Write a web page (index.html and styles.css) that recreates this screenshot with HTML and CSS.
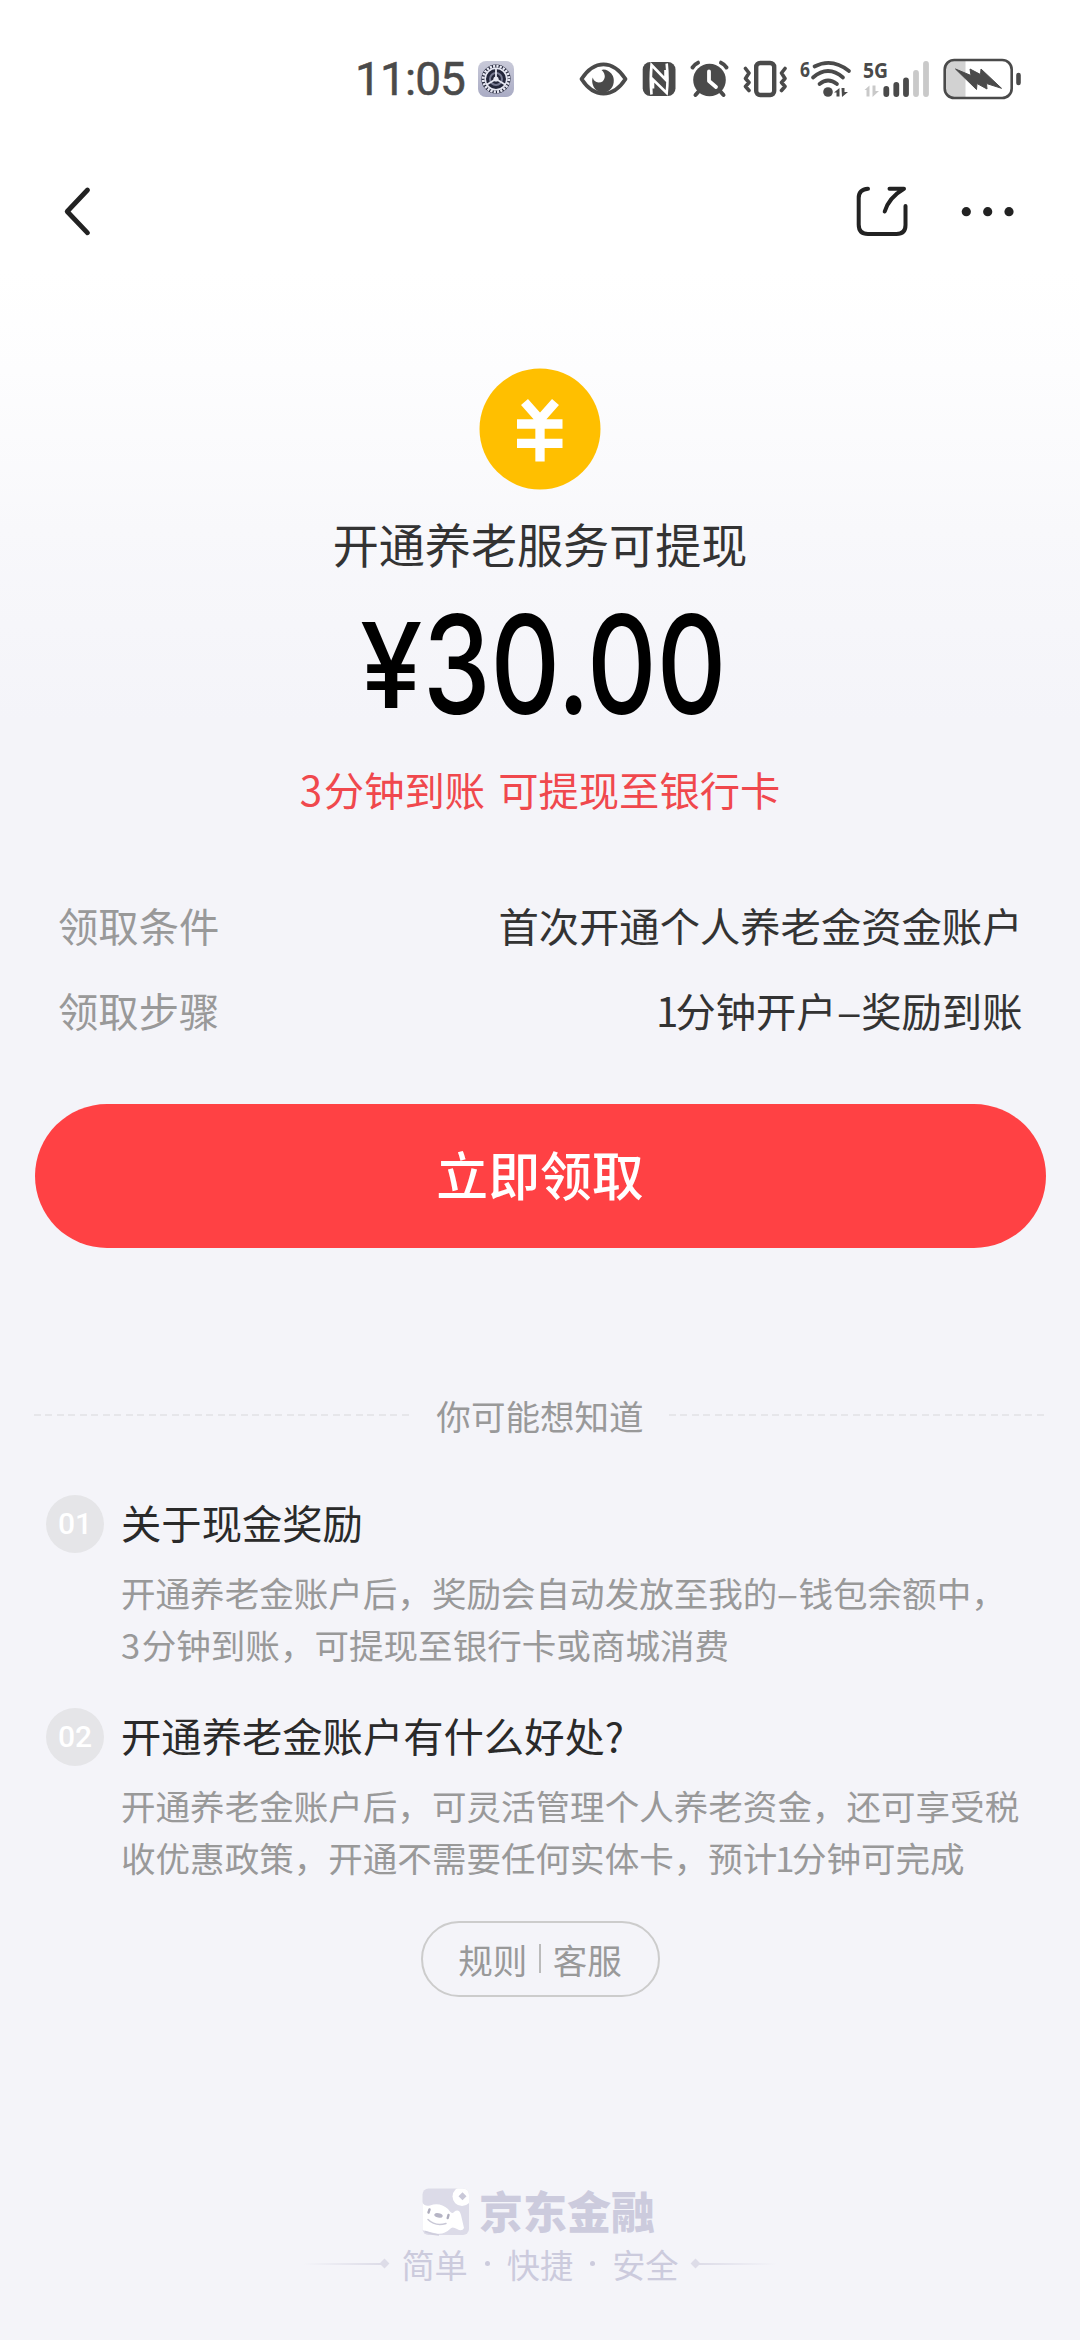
FILE: index.html
```html
<!DOCTYPE html>
<html lang="zh-CN">
<head>
<meta charset="utf-8">
<title>开通养老服务可提现</title>
<link rel="stylesheet" href="styles.css">
</head>
<body>
<div class="page">
  <header class="status">
    <span class="clock">11:05</span>
    <svg class="st-settings" width="36" height="40" viewBox="478 59 36 40">
      <defs><linearGradient id="sg" x1="0" y1="0" x2="0" y2="1"><stop offset="0" stop-color="#c9cad9"/><stop offset="1" stop-color="#a9abc4"/></linearGradient></defs>
      <rect x="478" y="61" width="36" height="36" rx="8" fill="url(#sg)"/>
      <circle cx="496" cy="79" r="14.6" fill="#23263a"/>
      <circle cx="496" cy="79" r="12.8" fill="none" stroke="#e6e7f2" stroke-width="2.8" stroke-dasharray="2.2 1.15"/>
      <circle cx="496" cy="79" r="10.8" fill="none" stroke="#e6e7f2" stroke-width="1.6"/>
      <circle cx="496" cy="79" r="6" fill="none" stroke="#777a92" stroke-width="2"/>
      <path d="M496 79V68.500M496 79l-9 5.500M496 79l9 5.500" stroke="#e6e7f2" stroke-width="1.800"/>
      <circle cx="496" cy="79" r="2.600" fill="#e6e7f2"/>
    </svg>
    <svg class="st-eye" width="49" height="40" viewBox="579 59 49 40">
      <path d="M581.500 79C588 69 596 64.300 603.500 64.300S619 69 625.500 79C619 89 611 93.700 603.500 93.700S588 89 581.500 79Z" fill="none" stroke="#4a4a4a" stroke-width="3.800" stroke-linejoin="round"/>
      <path d="M603.500 69.500A10.800 11.500 0 1 1 592.700 77.500Q594 82 598.500 82.500Q604 82.500 604.800 77Q605 73 601.500 69.900Z" fill="#4a4a4a"/>
    </svg>
    <svg class="st-nfc" width="35" height="40" viewBox="642 59 35 40">
      <rect x="642.700" y="62" width="32.800" height="34" rx="7.500" fill="#4a4a4a"/>
      <path d="M651.500 94.500Q650 79 651.500 65L665.500 79.500V70M666.700 63.500Q668.300 79 666.700 93L653 79.500V88.500" fill="none" stroke="#fff" stroke-width="2.600"/>
    </svg>
    <svg class="st-alarm" width="39" height="40" viewBox="690 59 39 40">
      <circle cx="709.500" cy="80" r="16.300" fill="#4a4a4a"/>
      <path d="M692.500 67.500Q694 64.500 698 62.700M726.500 67.500Q725 64.500 721 62.700M699 91l-3.500 4M720 91l3.500 4" fill="none" stroke="#4a4a4a" stroke-width="4" stroke-linecap="round"/>
      <path d="M709 71.500V81l7 6" fill="none" stroke="#fff" stroke-width="3.800" stroke-linecap="round" stroke-linejoin="round"/>
    </svg>
    <svg class="st-vibrate" width="47" height="40" viewBox="742 59 47 40">
      <rect x="756.200" y="63" width="18" height="32" rx="4" fill="none" stroke="#4a4a4a" stroke-width="4.400"/>
      <path d="M745.500 68.500l3.500 4.500-3.500 5.500 3.500 4-3.500 4 3.500 4M785 68.500l-3.500 4.500 3.500 5.500-3.500 4 3.500 4-3.500 4" fill="none" stroke="#4a4a4a" stroke-width="3.600" stroke-linecap="round" stroke-linejoin="round"/>
    </svg>
    <svg class="st-wifi" width="52" height="40" viewBox="800 59 52 40">
      <text x="800" y="76.500" class="tiny" textLength="10" lengthAdjust="spacingAndGlyphs">6</text>
      <g fill="none" stroke="#4a4a4a" stroke-width="3.700" stroke-linecap="round">
        <path d="M814.500 66.500Q832 57.500 849 71"/>
        <path d="M813 77.500Q828 64.500 843 77.500"/>
        <path d="M819.500 84Q828 77 837 84"/>
      </g>
      <circle cx="828" cy="92" r="4.800" fill="#4a4a4a"/>
      <path d="M834 92.500l5.500-4.500v8.500h-3v-4ZM841.500 88h3v4h3.500l-6 5Z" fill="#4a4a4a"/>
    </svg>
    <svg class="st-cell" width="67" height="40" viewBox="863 59 67 40">
      <text x="863" y="77.500" class="tiny" textLength="25" lengthAdjust="spacingAndGlyphs">5G</text>
      <path d="M864.500 90l5-4.500V96.500h-3V90ZM872.500 85.500h3V91h3.500l-6.500 6Z" fill="#c9c9c9"/>
      <g stroke-width="5.800" stroke-linecap="round" stroke="#4a4a4a">
        <path d="M886.300 89V94M896.300 85V94M906 80.500V94"/>
        <path d="M916 73V94M926 64V94" stroke="#c9c9c9"/>
      </g>
    </svg>
    <svg class="st-battery" width="80" height="40" viewBox="942 59 80 40">
      <path d="M953 61h12.500v36H953a8 8 0 0 1-8-8V69a8 8 0 0 1 8-8Z" fill="#d2d2d2"/>
      <rect x="944.700" y="60" width="67" height="38" rx="9.500" fill="none" stroke="#4a4a4a" stroke-width="2.600"/>
      <path d="M955.500 69l15.500 6.500-1-6.500 10.500 5.500.5-5.500 20.500 19.300-15-4.800.5 5.500-10-5.500-.5 6Z" fill="#4a4a4a" stroke="#4a4a4a" stroke-width="1" stroke-linejoin="round"/>
      <path d="M1018.500 75V83" stroke="#4a4a4a" stroke-width="4.600" stroke-linecap="round"/>
    </svg>
  </header>

  <nav class="nav">
    <svg width="30" height="54" viewBox="62 184 30 54"><path d="M87.500 190L67.200 211.500L87.500 232.800" fill="none" stroke="#222" stroke-width="4.800" stroke-linecap="round" stroke-linejoin="round"/></svg>
    <svg width="160" height="54" viewBox="855 184 160 54">
      <path d="M868 188.800Q858.700 189.500 858.700 198V224.500Q858.700 234 868 234H896.500Q905.500 234 905.500 225V206M889.500 188.800H904Q889 197.500 884.700 211.500" fill="none" stroke="#222" stroke-width="4" stroke-linecap="round" stroke-linejoin="round"/>
      <g fill="#222"><circle cx="966.300" cy="211.700" r="4.600"/><circle cx="987.700" cy="211.700" r="4.600"/><circle cx="1009" cy="211.700" r="4.600"/></g>
    </svg>
  </nav>

  <main>
    <section class="hero">
      <svg class="coin" width="122" height="122" viewBox="0 0 122 122">
        <circle cx="61" cy="61" r="60.500" fill="#ffbf00"/>
        <path d="M45.500 34L61 51.500L76.500 34M61 50V93.500M38 56H83.500M38 75.300H83.500" fill="none" stroke="#fff" stroke-width="9.300"/>
      </svg>
      <h1 class="title">开通养老服务可提现</h1>
      <div class="amount"><span class="yen">¥</span><span class="num">30.00</span></div>
      <p class="hint"><span class="three">3</span>分钟到账 可提现至银行卡</p>
    </section>

    <dl class="facts">
      <div class="fact"><dt>领取条件</dt><dd>首次开通个人养老金资金账户</dd></div>
      <div class="fact"><dt>领取步骤</dt><dd><span class="one">1</span>分钟开户<span class="dash">–</span>奖励到账</dd></div>
    </dl>

    <button class="cta">立即领取</button>

    <div class="divider"><span class="rule"></span><span>你可能想知道</span><span class="rule"></span></div>

    <section class="faq">
      <article class="item">
        <span class="badge">01</span>
        <div>
          <h2>关于现金奖励</h2>
          <p>开通养老金账户后，奖励会自动发放至我的<span class="dash">–</span>钱包余额中，<br><span class="three">3</span>分钟到账，可提现至银行卡或商城消费</p>
        </div>
      </article>
      <article class="item">
        <span class="badge">02</span>
        <div>
          <h2>开通养老金账户有什么好处?</h2>
          <p>开通养老金账户后，可灵活管理个人养老资金，还可享受税<br>收优惠政策，开通不需要任何实体卡，预计<span class="one">1</span>分钟可完成</p>
        </div>
      </article>
    </section>

    <div class="links"><a>规则</a><i></i><a>客服</a></div>
  </main>

  <footer class="brand">
    <div class="logo">
      <svg width="48" height="48" viewBox="0 0 48 48">
        <defs><clipPath id="lc"><rect x=".5" y=".5" width="46.500" height="46.500" rx="6"/></clipPath></defs>
        <g clip-path="url(#lc)">
          <rect width="48" height="48" fill="#dcdbe8"/>
          <path d="M0 14Q3 19 8 17.500Q18 14 26 21Q30 27 32 24Q37 20 39 27L42 40Q40 44 35 41Q30 38 28 41Q22 47 14 45.500L0 42Z" fill="#fff"/>
          <circle cx="40" cy="8.500" r="9.500" fill="#fff"/>
        </g>
        <path d="M40.500 4.200l4 4-4 4-4-4Z" fill="#c9c8d8"/>
        <path d="M7.500 21.500l-1 3M26.500 27l-.8 3" stroke="#aeadbd" stroke-width="2.400" stroke-linecap="round"/>
        <ellipse cx="16.500" cy="27.300" rx="4.300" ry="2.200" transform="rotate(12 16.500 27.300)" fill="#b6b5c5"/>
        <path d="M6 31.500Q13 38.500 24 35.500" fill="none" stroke="#c9c8d6" stroke-width="1.500" stroke-linecap="round"/>
        <path d="M3 43.500Q10 46.500 17 47" fill="none" stroke="#cfcedd" stroke-width="1.500"/>
      </svg>
      <span>京东金融</span>
    </div>
    <div class="slogan">
      <span class="ray"></span><b class="gem"></b>
      <span class="words"><span>简单</span><em></em><span>快捷</span><em></em><span>安全</span></span>
      <b class="gem"></b><span class="ray right"></span>
    </div>
  </footer>
</div>
</body>
</html>
```
FILE: styles.css
```css
* { box-sizing: border-box; margin: 0; padding: 0; }
body { background: #f4f4f9; }
svg { display: block; flex: none; overflow: visible; }
.page {
  width: 1080px; height: 2340px; overflow: hidden;
  display: flex; flex-direction: column;
  background: linear-gradient(#fff 270px, #fdfdfe 370px, #f8f8fb 530px, #f4f4f9 720px);
  font-family: "Noto Sans CJK SC", "Liberation Sans", sans-serif;
  color: #333;
}
.status { height: 150px; padding: 59px 0 0 355px; display: flex; align-items: flex-start; }
.clock { width: 123px; font: 400 46px/40px Roboto, sans-serif; color: #4a4a4a; -webkit-text-stroke: .5px #4a4a4a; letter-spacing: -.9px; white-space: nowrap; }
.tiny { font: 700 22px "Noto Sans", sans-serif; fill: #4a4a4a; }
.st-eye { margin-left: 65px; }
.st-nfc { margin-left: 14px; }
.st-alarm { margin-left: 13px; }
.st-vibrate { margin-left: 13px; }
.st-wifi { margin-left: 11px; }
.st-cell { margin-left: 11px; }
.st-battery { margin-left: 12px; }

.nav { height: 123px; padding: 34px 65px 0 62px; display: flex; justify-content: space-between; align-items: flex-start; }

.hero { padding-top: 95px; display: flex; flex-direction: column; align-items: center; }
.title { margin-top: 30px; font-size: 46.08px; line-height: 46px; font-weight: 400; }
.amount { margin-top: 38px; height: 120px; width: 360px; display: flex; color: #000; font-family: Inter, sans-serif; font-weight: 500; line-height: 120px; white-space: nowrap; }
.yen { width: 63px; font-size: 118px; line-height: 123px; transform: scaleX(.95); transform-origin: 0 50%; }
.num { font-size: 136.5px; line-height: 121px; transform: scaleX(.79); transform-origin: 0 50%; }
.hint { margin-top: 42px; font-size: 40.32px; line-height: 46px; color: #f0484d; word-spacing: 4px; }
.three { letter-spacing: .045em; }
.one { letter-spacing: -.075em; margin-left: -.06em; }
.dash { display: inline-block; width: .61em; text-align: center; transform: scaleX(1.15); }

.facts { margin-top: 88px; padding: 0 57.5px 0 58px; display: flex; flex-direction: column; gap: 35px; }
.fact { display: flex; justify-content: space-between; font-size: 40.32px; line-height: 50px; }
.fact dt { color: #999; }
.cta { display: block; width: 1011px; height: 144px; margin: 69px auto 0; padding-bottom: 4px; border: 0; border-radius: 72px; background: #ff4144; color: #fff; font: 500 51.84px/138px "Noto Sans CJK SC", sans-serif; }
.divider { margin: 147px 34px 0; display: flex; justify-content: space-between; align-items: center; font-size: 34.56px; line-height: 40px; color: #999; }
.rule { width: 377px; height: 2px; background: repeating-linear-gradient(90deg, #e6e6ea 0 7px, transparent 7px 11.500px); }
.faq { margin-top: 60px; padding-left: 46px; display: flex; flex-direction: column; gap: 37.5px; }
.item { display: flex; gap: 17px; white-space: nowrap; }
.badge { width: 58px; height: 58px; border-radius: 50%; background: #e5e5e8; color: #fff; text-align: center; font: 500 30px/58px Roboto, sans-serif; flex: none; }
.item h2 { font-size: 40.32px; line-height: 54px; font-weight: 400; color: #2a2a2a; }
.item p { margin-top: 18px; font-size: 34.56px; line-height: 51.8px; color: #999; }
.links { width: 239px; height: 76px; margin: 37px auto 0; border: 2px solid #ccc; border-radius: 38px; display: flex; justify-content: center; align-items: center; gap: 12px; font-size: 34.56px; line-height: 40px; color: #999; }
.links i { width: 1.5px; height: 29px; background: #bbb; }

.brand { margin-top: 191px; display: flex; flex-direction: column; align-items: center; color: #cccbdd; }
.logo { display: flex; align-items: flex-start; gap: 9px; margin-right: 3px; font-size: 44px; line-height: 45px; font-weight: 900; }
.slogan { margin-top: 6px; display: flex; align-items: center; font-size: 33.2px; line-height: 44px; }
.words { display: flex; align-items: center; gap: 17px; margin: 0 13px; }
.words em { width: 5px; height: 5px; border-radius: 50%; background: #cccbdd; }
.ray { width: 78px; height: 2px; background: linear-gradient(90deg, transparent, #dddce8); }
.ray.right { transform: scaleX(-1); }
.gem { width: 7px; height: 7px; background: #dddce8; transform: rotate(45deg); }
```
